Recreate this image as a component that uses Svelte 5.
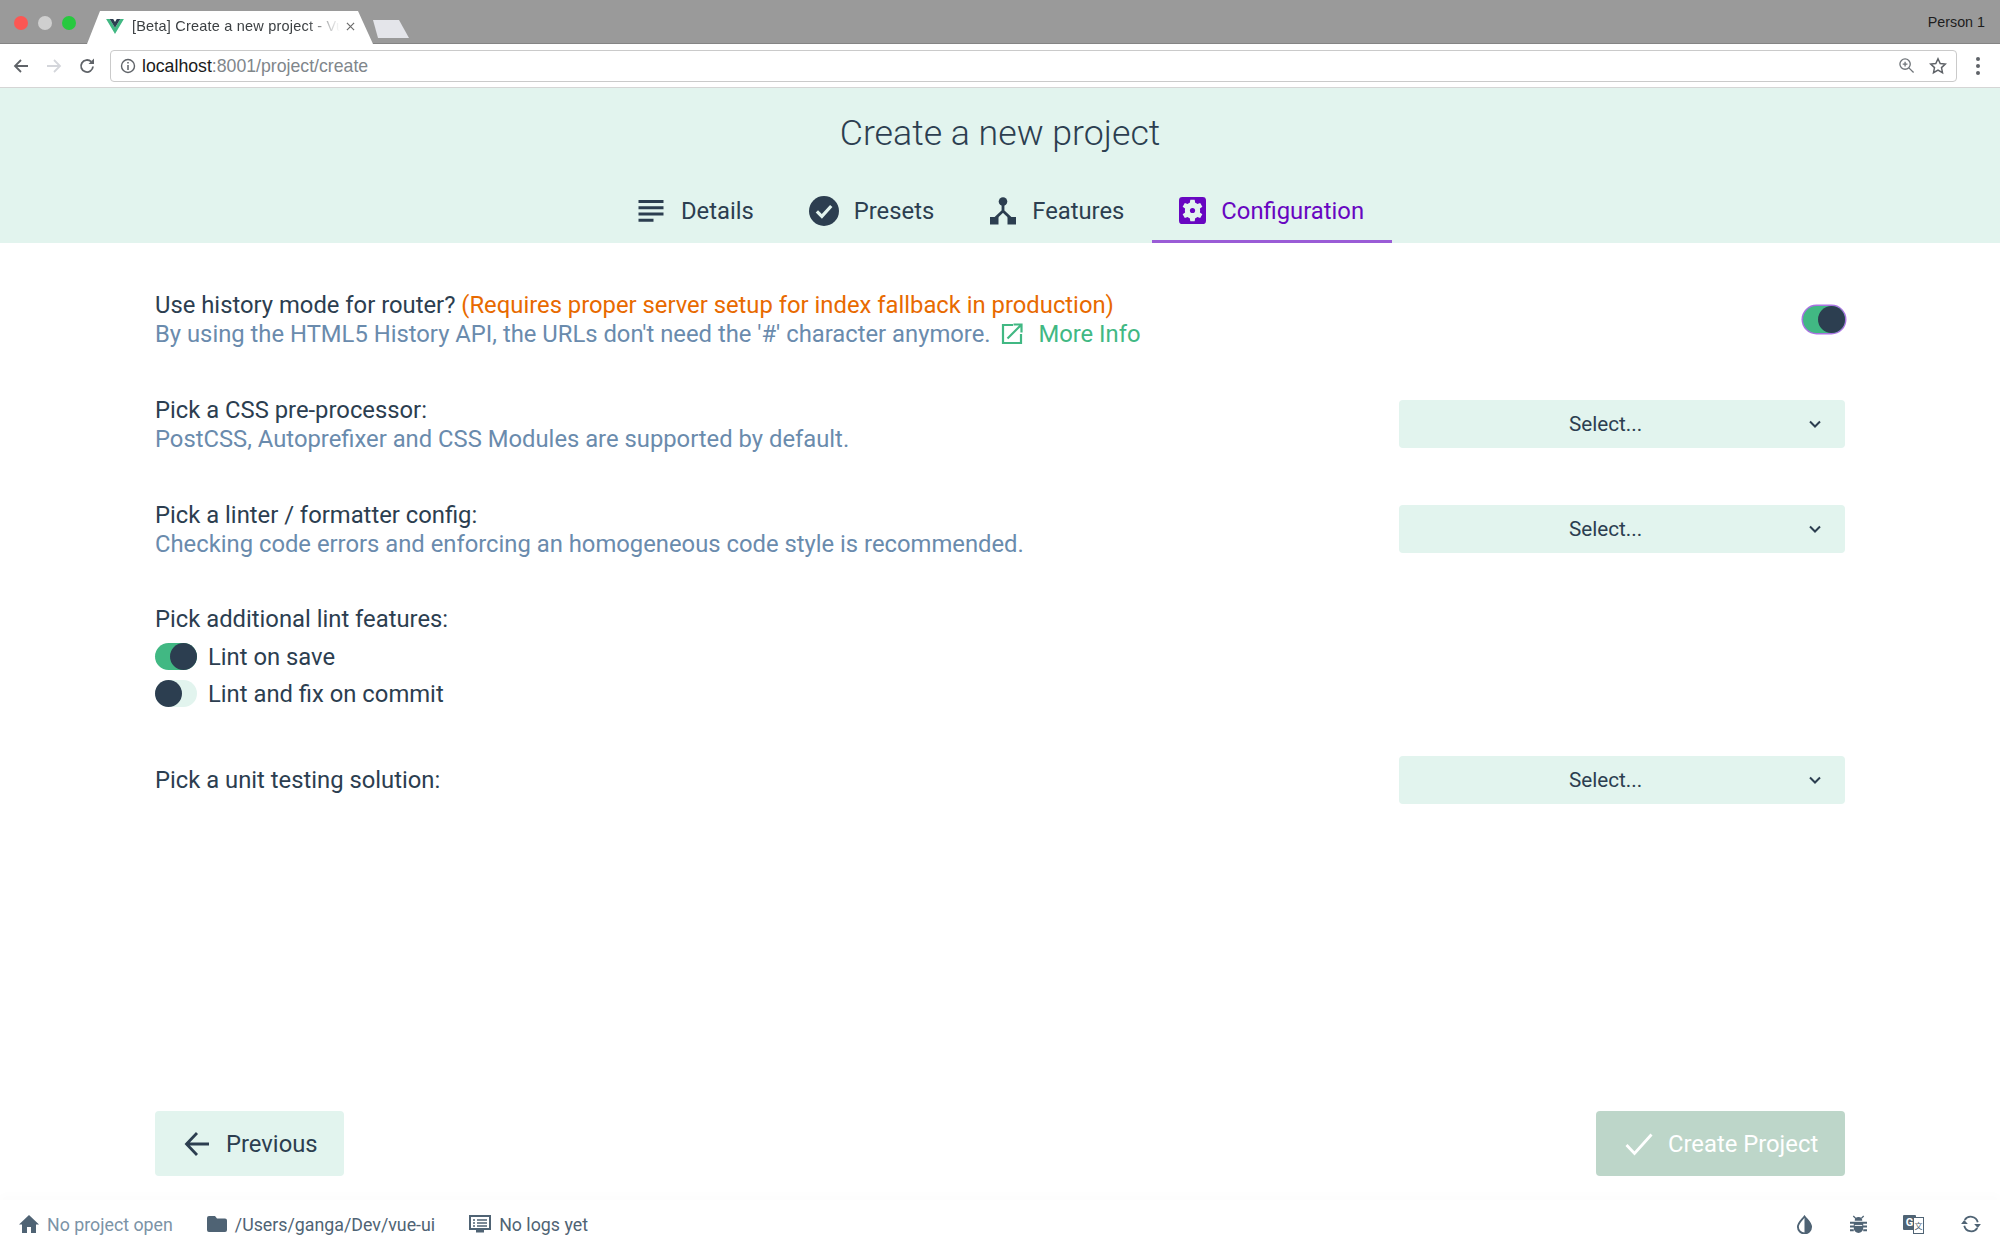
<script lang="ts">
	const tabs = [
		{ id: 'details', label: 'Details' },
		{ id: 'presets', label: 'Presets' },
		{ id: 'features', label: 'Features' },
		{ id: 'config', label: 'Configuration' }
	];
	let current = $state('config');
	let lintOnSave = $state(true);
	let lintOnCommit = $state(false);
	let history = $state(true);
</script>

<div class="page">
	<div class="tabstrip">
		<div class="lights">
			<span class="light red"></span>
			<span class="light grey"></span>
			<span class="light green"></span>
		</div>
		<div class="tab">
			<svg class="favicon" viewBox="0 0 20 18" width="18" height="16">
				<path d="M0 1h4l6 10 6-10h4L10 18z" fill="#41b883" />
				<path d="M4 1h4l2 3.500 2-3.500h4l-6 10z" fill="#2c3e50" />
			</svg>
			<span class="tab-title">[Beta] Create a new project - Vue</span>
			<svg class="tab-close" viewBox="0 0 10 10" width="9" height="9">
				<path d="M1 1l8 8M9 1l-8 8" stroke="#6b6b6b" stroke-width="1.300" />
			</svg>
		</div>
		<div class="newtab"></div>
		<span class="person">Person 1</span>
	</div>

	<div class="toolbar">
		<svg class="nav" viewBox="0 0 18 18" width="18" height="18">
			<path d="M16 9H3M9 3L3 9l6 6" fill="none" stroke="#5f6368" stroke-width="1.800" />
		</svg>
		<svg class="nav" viewBox="0 0 18 18" width="18" height="18">
			<path d="M2 9h13M9 3l6 6-6 6" fill="none" stroke="#d4d6db" stroke-width="1.800" />
		</svg>
		<svg class="nav" viewBox="0 0 18 18" width="18" height="18">
			<path d="M15 9.500A6 6 0 1 1 13.200 4.700" fill="none" stroke="#5f6368" stroke-width="1.800" />
			<path d="M16 1.500V7h-5.500z" fill="#5f6368" />
		</svg>
		<div class="omnibox">
			<svg viewBox="0 0 16 16" width="16" height="16">
				<circle cx="8" cy="8" r="6.500" fill="none" stroke="#5f6368" stroke-width="1.400" />
				<path d="M8 7v5M8 4v1.600" stroke="#5f6368" stroke-width="1.500" />
			</svg>
			<span class="url"><b>localhost</b>:8001/project/create</span>
			<svg class="omni-zoom" viewBox="0 0 18 18" width="17" height="17">
				<circle cx="7.500" cy="7.500" r="5.500" fill="none" stroke="#70757a" stroke-width="1.400" />
				<path d="M11.500 11.500L16.500 16.500M7.500 5v5M5 7.500h5" stroke="#70757a" stroke-width="1.400" />
			</svg>
			<svg class="omni-star" viewBox="0 0 18 18" width="18" height="18">
				<path d="M9 1.800l2.200 4.700 5.100.6-3.800 3.500 1 5.100L9 13.200l-4.500 2.500 1-5.100-3.800-3.500 5.100-.6z" fill="none" stroke="#5f6368" stroke-width="1.500" />
			</svg>
		</div>
		<div class="kebab"><i></i><i></i><i></i></div>
	</div>

	<header class="header">
		<h1>Create a new project</h1>
		<nav class="steps">
			{#each tabs as t}
				<button class="step" class:active={current === t.id} onclick={() => (current = t.id)}>
					{#if t.id === 'details'}
						<svg viewBox="0 0 30 30" width="30" height="30"><path d="M2.500 4h25v3h-25zM2.500 10.300h25v3h-25zM2.500 16.500h25v3h-25zM2.500 22.800h15v3h-15z" fill="currentColor" /></svg>
					{:else if t.id === 'presets'}
						<svg viewBox="0 0 24 24" width="30" height="30"><circle cx="12" cy="12" r="12" fill="currentColor" /><path d="M6.300 12.300l4 4 7.500-8.300" fill="none" stroke="#e2f4ee" stroke-width="2.600" /></svg>
					{:else if t.id === 'features'}
						<svg viewBox="0 0 28 28" width="28" height="28"><circle cx="14" cy="4.500" r="4.300" fill="currentColor" /><path d="M14 7v7L5 22.500M14 14l9 8.500" fill="none" stroke="currentColor" stroke-width="2.800" /><path d="M1 20h8.500v7.500H1zM18.500 20H27v7.500h-8.500z" fill="currentColor" /></svg>
					{:else}
						<svg viewBox="0 0 24 24" width="27" height="27">
							<rect width="24" height="24" rx="3" fill="currentColor" />
							<path fill="#e2f4ee" transform="translate(12 12) scale(1.2) translate(-12 -12)" d="M10.400 4l-.4 2.300a6 6 0 0 0-1.600.9L6.300 6.400 4.700 9.200l1.800 1.400a6 6 0 0 0 0 2.800l-1.800 1.400 1.600 2.800 2.100-.8a6 6 0 0 0 1.600.9l.4 2.300h3.200l.4-2.300a6 6 0 0 0 1.600-.9l2.100.8 1.600-2.800-1.800-1.400a6 6 0 0 0 0-2.800l1.800-1.400-1.600-2.800-2.100.8a6 6 0 0 0-1.600-.9L13.600 4z" />
							<circle cx="12" cy="12" r="2.300" fill="currentColor" />
						</svg>
					{/if}
					<span>{t.label}</span>
				</button>
			{/each}
		</nav>
	</header>

	<main class="content">
		<section class="row first">
			<div class="info">
				<div class="label">Use history mode for router? <span class="warn">(Requires proper server setup for index fallback in production)</span></div>
				<div class="desc">
					By using the HTML5 History API, the URLs don't need the '#' character anymore.
					<a class="more" href="#more">
						<svg viewBox="0 0 22 22" width="22" height="22"><path d="M12 2H2v18h18V11M6.500 15.500L19.500 2.500M12.500 1.500h8v8" fill="none" stroke="currentColor" stroke-width="2.200" /></svg>
						More Info
					</a>
				</div>
			</div>
			<button class="toggle focused" class:on={history} aria-label="history" onclick={() => (history = !history)}><i></i></button>
		</section>

		<section class="row">
			<div class="info">
				<div class="label">Pick a CSS pre-processor:</div>
				<div class="desc">PostCSS, Autoprefixer and CSS Modules are supported by default.</div>
			</div>
			<button class="select">
				<span>Select...</span>
				<svg viewBox="0 0 12 8" width="12" height="8"><path d="M1 1.500l5 5 5-5" fill="none" stroke="#2c3e50" stroke-width="2" /></svg>
			</button>
		</section>

		<section class="row">
			<div class="info">
				<div class="label">Pick a linter / formatter config:</div>
				<div class="desc">Checking code errors and enforcing an homogeneous code style is recommended.</div>
			</div>
			<button class="select">
				<span>Select...</span>
				<svg viewBox="0 0 12 8" width="12" height="8"><path d="M1 1.500l5 5 5-5" fill="none" stroke="#2c3e50" stroke-width="2" /></svg>
			</button>
		</section>

		<section class="lint">
			<div class="label">Pick additional lint features:</div>
			<label class="check">
				<button class="toggle" class:on={lintOnSave} aria-label="save" onclick={() => (lintOnSave = !lintOnSave)}><i></i></button>
				<span>Lint on save</span>
			</label>
			<label class="check">
				<button class="toggle" class:on={lintOnCommit} aria-label="commit" onclick={() => (lintOnCommit = !lintOnCommit)}><i></i></button>
				<span>Lint and fix on commit</span>
			</label>
		</section>

		<section class="row unit">
			<div class="label">Pick a unit testing solution:</div>
			<button class="select">
				<span>Select...</span>
				<svg viewBox="0 0 12 8" width="12" height="8"><path d="M1 1.500l5 5 5-5" fill="none" stroke="#2c3e50" stroke-width="2" /></svg>
			</button>
		</section>
	</main>

	<div class="actions">
		<button class="btn prev">
			<svg viewBox="0 0 26 26" width="26" height="26"><path d="M25 13H3M13 2L2.500 13 13 24" fill="none" stroke="currentColor" stroke-width="2.800" /></svg>
			Previous
		</button>
		<button class="btn create">
			<svg viewBox="0 0 28 24" width="28" height="24"><path d="M1.500 13l8 8.500L26.500 2.500" fill="none" stroke="currentColor" stroke-width="2.800" /></svg>
			Create Project
		</button>
	</div>

	<footer class="status">
		<div class="item">
			<svg viewBox="0 0 20 18" width="20" height="18"><path d="M10 0L0 9.500h3V18h5v-6h4v6h5V9.500h3z" fill="#4f6374" /></svg>
			<span class="muted">No project open</span>
		</div>
		<div class="item">
			<svg viewBox="0 0 20 16" width="20" height="16"><path d="M2 0h6l2 2.500h8a2 2 0 0 1 2 2V14a2 2 0 0 1-2 2H2a2 2 0 0 1-2-2V2a2 2 0 0 1 2-2z" fill="#4f6374" /></svg>
			<span>/Users/ganga/Dev/vue-ui</span>
		</div>
		<div class="item">
			<svg viewBox="0 0 22 18" width="22" height="18"><path d="M1 1h20v13H1z" fill="none" stroke="#4f6374" stroke-width="2" /><path d="M4 5h2M8 5h10M4 8h2M8 8h10M4 11h2M8 11h10" stroke="#4f6374" stroke-width="1.400" /><path d="M7 15h8v2.500H7z" fill="#4f6374" /></svg>
			<span>No logs yet</span>
		</div>
		<div class="spacer"></div>
		<svg class="sicon" viewBox="0 0 18 20" width="17" height="19"><path d="M9 1.500C6 5.500 2 8.500 2 12.500a7 7 0 0 0 14 0c0-4-4-7-7-11z" fill="none" stroke="#4f6374" stroke-width="2" /><path d="M9 1.500c3 4 7 7 7 11a7 7 0 0 1-7 7z" fill="#4f6374" /></svg>
		<svg class="sicon" viewBox="0 0 18 20" width="17" height="19"><path d="M5 6a4 4 0 0 1 8 0zM4 7h10v7a5 5 0 0 1-10 0zM0 7h4v2.200H0zM14 7h4v2.200h-4zM0 11h4v2.200H0zM14 11h4v2.200h-4zM0 15h4v2.200H0zM14 15h4v2.200h-4zM4 .5l2.500 2.500-1 1-2.500-2.500zM14 .5l-2.500 2.500 1 1 2.500-2.500z" fill="#4f6374" /><path d="M5 11h8" stroke="#fff" stroke-width="1" /></svg>
		<div class="translate">
			<span class="g">G</span>
			<span class="x">文</span>
		</div>
		<svg class="sicon last" viewBox="0 0 22 20" width="20" height="18">
			<path d="M18.500 8A8 8 0 0 0 4 5.500M3.500 12A8 8 0 0 0 18 14.500" fill="none" stroke="#4f6374" stroke-width="2" />
			<path d="M0 10l3.500-4.500L7.500 10zM22 10l-3.500 4.500-4-4.500z" fill="#4f6374" />
		</svg>
	</footer>
</div>

<style>
	:global(body) {
		margin: 0;
		background: #fff;
	}

	.page {
		width: 2000px;
		height: 1250px;
		display: flex;
		flex-direction: column;
		overflow: hidden;
		font-family: Roboto, sans-serif;
		font-size: 23.800px;
		font-weight: 400;
		color: #2c3e50;
	}

	button {
		font-family: inherit;
		border: 0;
		padding: 0;
		cursor: pointer;
	}

	/* browser chrome */
	.tabstrip {
		height: 44px;
		flex: none;
		box-sizing: border-box;
		background: #9a9a9a;
		border-bottom: 1px solid #848484;
		display: flex;
		align-items: flex-end;
		font-family: "Liberation Sans", sans-serif;
	}

	.lights {
		display: flex;
		gap: 10px;
		align-self: flex-start;
		padding: 16px 0 0 14px;
		width: 87px;
		box-sizing: border-box;
	}

	.light {
		width: 14px;
		height: 14px;
		border-radius: 50%;
		flex: none;
	}

	.red { background: #fc5753; }
	.grey { background: #cfcfcf; }
	.green { background: #27c93f; }

	.tab {
		width: 286px;
		height: 33px;
		margin-bottom: -1px;
		background: #fff;
		clip-path: polygon(0 100%, 13px 0, 271px 0, 100% 100%);
		display: flex;
		align-items: center;
		box-sizing: border-box;
		padding: 0 18px 3px 19px;
		font-size: 14.500px;
		color: #3c4043;
	}

	.favicon {
		flex: none;
		margin-right: 8px;
	}

	.tab-title {
		flex: 1;
		min-width: 0;
		white-space: nowrap;
		overflow: hidden;
		letter-spacing: 0.2px;
		mask-image: linear-gradient(to right, #000 84%, transparent 100%);
	}

	.tab-close { flex: none; margin-left: 6px; }

	.newtab {
		width: 36px;
		height: 18px;
		margin: 0 0 5px 0;
		background: #e4e5ea;
		clip-path: polygon(0 0, 26px 0, 100% 100%, 5px 100%);
	}

	.person {
		margin-left: auto;
		align-self: center;
		padding-right: 15px;
		font-size: 14.300px;
		color: #1d1d1d;
	}

	.toolbar {
		height: 44px;
		flex: none;
		box-sizing: border-box;
		background: #fff;
		border-bottom: 1px solid #d5d5d5;
		display: flex;
		align-items: center;
		padding: 0 0 0 12px;
	}

	.nav { flex: none; margin-right: 15px; }
	.nav:nth-of-type(3) { margin-right: 14px; }

	.omnibox {
		width: 1847px;
		height: 32px;
		box-sizing: border-box;
		border: 1px solid #cacaca;
		border-radius: 4px;
		display: flex;
		align-items: center;
		padding: 0 9px 0 9px;
		gap: 6px;
		flex: none;
	}

	.url {
		font-family: "Liberation Sans", sans-serif;
		font-size: 17.700px;
		color: #80868b;
		flex: 1;
		padding-top: 2px;
	}

	.url b {
		font-weight: 400;
		color: #1a1a1a;
	}

	.omni-star { margin-left: 8px; }

	.kebab {
		display: flex;
		flex-direction: column;
		gap: 3px;
		margin-left: 19px;
	}

	.kebab i {
		width: 4px;
		height: 4px;
		border-radius: 50%;
		background: #5f6368;
	}

	/* header */
	.header {
		height: 155px;
		flex: none;
		background: #e2f4ee;
		display: flex;
		flex-direction: column;
		align-items: center;
	}

	h1 {
		margin: 0;
		padding-top: 23px;
		font-size: 35.700px;
		line-height: 44px;
		font-weight: 300;
	}

	.steps {
		display: flex;
		margin-top: 20px;
	}

	.step {
		height: 68px;
		box-sizing: border-box;
		padding: 6px 27.500px 0;
		display: flex;
		align-items: center;
		gap: 15px;
		background: none;
		font-size: 23.800px;
		color: #2c3e50;
		border-bottom: 3px solid transparent;
	}

	.step.active {
		color: #6806c1;
		border-bottom-color: #9a5cd6;
	}

	/* form */
	.content {
		flex: 1;
		padding: 0 155px;
	}

	.row {
		display: flex;
		justify-content: space-between;
		align-items: center;
		height: 105px;
	}

	.row.first {
		margin-top: 23px;
	}

	.info,
	.label {
		line-height: 29px;
	}

	.info { padding-top: 2px; }

	.warn { color: #e86a00; }

	.desc { color: #6a8bad; }

	.more {
		color: #41b883;
		text-decoration: none;
		margin-left: 5px;
	}

	.more svg {
		vertical-align: -3px;
		margin-right: 9px;
	}

	.toggle {
		width: 42px;
		height: 27px;
		border-radius: 14px;
		background: #e2f4ee;
		display: flex;
		flex: none;
		justify-content: flex-start;
	}

	.toggle.on {
		background: #41b883;
		justify-content: flex-end;
	}

	.toggle i {
		width: 27px;
		height: 27px;
		border-radius: 50%;
		background: #2c3e50;
	}

	.toggle.focused {
		box-shadow: 0 0 0 1.500px #a873e0;
		margin-top: 2px;
	}

	.select {
		width: 446px;
		height: 48px;
		border-radius: 4px;
		background: #e2f4ee;
		color: #2c3e50;
		font-size: 20.700px;
		display: flex;
		align-items: center;
		padding: 0 24px 0 0;
		box-sizing: border-box;
		flex: none;
	}

	.select span { flex: 1; text-align: center; padding-left: 3px; }

	.lint {
		padding-top: 24px;
	}

	.lint .label { margin-bottom: 4px; }

	.check {
		display: flex;
		align-items: center;
		gap: 11px;
		height: 37px;
	}

	.check span { padding-top: 1px; }

	.unit {
		height: 48px;
		margin-top: 44px;
	}

	/* actions */
	.actions {
		flex: none;
		display: flex;
		justify-content: space-between;
		padding: 0 155px;
		height: 89px;
	}

	.btn {
		height: 65px;
		border-radius: 4px;
		display: flex;
		align-items: center;
		font-size: 23.800px;
		box-sizing: border-box;
	}

	.prev {
		width: 189px;
		background: #e2f4ee;
		color: #2c3e50;
		padding-left: 29px;
		gap: 16px;
	}

	.create {
		width: 249px;
		background: #bdd6c9;
		color: #fff;
		padding-left: 29px;
		gap: 15px;
	}

	/* status bar */
	.status {
		height: 50px;
		flex: none;
		background: #fff;
		box-shadow: 0 -6px 8px rgba(0, 0, 0, 0.012);
		display: flex;
		align-items: center;
		padding: 0 19px 2px 19px;
		box-sizing: border-box;
		font-size: 17.800px;
		color: #4f6374;
	}

	.item {
		display: flex;
		align-items: center;
		gap: 8px;
		margin-right: 34px;
	}

	.muted { color: #7b93a6; }

	.spacer { flex: 1; }

	.sicon { margin-left: 37px; flex: none; }

	.translate {
		position: relative;
		width: 21px;
		height: 19px;
		margin-left: 36px;
		flex: none;
	}

	.translate .g {
		position: absolute;
		left: 0;
		top: 0;
		width: 13px;
		height: 15px;
		background: #4f6374;
		color: #fff;
		font-size: 11px;
		font-weight: 700;
		line-height: 15px;
		text-align: center;
		border-radius: 1px;
	}

	.translate .x {
		position: absolute;
		right: 0;
		top: 2px;
		width: 11px;
		height: 17px;
		box-sizing: border-box;
		border: 1px solid #4f6374;
		background: #fff;
		font-family: "Noto Sans CJK SC", sans-serif;
		font-size: 8px;
		line-height: 15px;
		text-align: center;
	}
</style>
